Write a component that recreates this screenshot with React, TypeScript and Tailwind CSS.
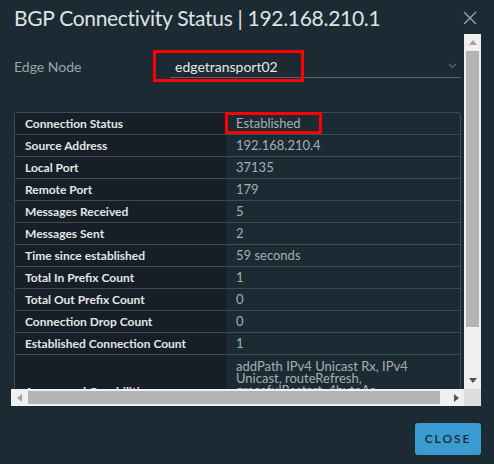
import React from 'react';

const rows: [string, string][] = [
  ['Connection Status', 'Established'],
  ['Source Address', '192.168.210.4'],
  ['Local Port', '37135'],
  ['Remote Port', '179'],
  ['Messages Received', '5'],
  ['Messages Sent', '2'],
  ['Time since established', '59 seconds'],
  ['Total In Prefix Count', '1'],
  ['Total Out Prefix Count', '0'],
  ['Connection Drop Count', '0'],
  ['Established Connection Count', '1'],
];

const capabilities =
  'addPath IPv4 Unicast Rx, IPv4 Unicast, routeRefresh, gracefulRestart, 4byteAs, multiProtocol IPv4 Unicast, enhancedRouteRefresh';

const App: React.FC = () => {
  return (
    <div
      className="w-[494px] h-[464px] bg-[#1c2a33] flex flex-col overflow-hidden"
      style={{ fontFamily: 'Lato, "Noto Sans", sans-serif' }}
    >
      {/* header */}
      <div className="flex items-start justify-between pl-[14px] pr-[17px] pt-[5px] h-[34px]">
        <h1 className="text-[21px] leading-[26px] text-[#dfe3e5] font-normal tracking-[-0.3px]">
          BGP Connectivity Status | 192.168.210.1
        </h1>
        <svg width="14" height="14" viewBox="0 0 14 14" className="mt-[6px]">
          <path d="M1 1 L13 13 M13 1 L1 13" stroke="#9aa4aa" strokeWidth="1.4" />
        </svg>
      </div>

      {/* scroll area */}
      <div className="ml-[11px] w-[470px] grid grid-cols-[453px_17px] grid-rows-[355px_17px]">
        <div className="overflow-hidden">
          <div className="relative mt-[21px] flex items-center">
            <span className="w-[159px] pl-[3px] text-[14px] text-[#9aa3a8]">Edge Node</span>
            <div className="flex-1 mr-[3px] h-[23px] border-b border-[#56646c] flex items-center justify-between pl-[5px] pr-[4px]">
              <span className="text-[14px] text-[#e6e9ea]">edgetransport02</span>
              <svg width="9" height="6" viewBox="0 0 9 6">
                <path d="M1 1 L4.5 4.5 L8 1" fill="none" stroke="#5c6a72" strokeWidth="1.2" />
              </svg>
            </div>
            <div className="absolute left-[142px] top-[-5px] w-[151px] h-[32px] border-[3px] border-[#ff0000]" />
          </div>

          <div className="ml-[3px] mt-[34px] w-[447px] border border-[#3e4b53] rounded-[3px]">
            {rows.map(([label, value], i) => (
              <div key={label} className="relative grid grid-cols-[211px_1fr] h-[22px] border-b border-[#3e4b53]">
                <div className="bg-[#161f27] pl-[10px] flex items-center text-[12px] font-bold text-[#e3e6e8]">
                  {label}
                </div>
                <div className="pl-[10px] flex items-center text-[13px] text-[#a7afb4]">{value}</div>
                {i === 0 && (
                  <div className="absolute left-[210px] top-[-1px] w-[97px] h-[22px] border-[3px] border-[#ff0000]" />
                )}
              </div>
            ))}
            <div className="grid grid-cols-[211px_1fr] min-h-[74px]">
              <div className="bg-[#161f27] pl-[10px] flex items-center text-[12px] font-bold text-[#e3e6e8]">
                Announced Capabilities
              </div>
              <div className="pl-[10px] pt-[5px] pb-[5px] text-[13px] leading-[12px] text-[#a7afb4]">
                <p className="max-w-[200px]">{capabilities}</p>
              </div>
            </div>
          </div>
        </div>

        {/* vertical scrollbar */}
        <div className="bg-[#f0f0f0] flex flex-col items-center">
          <div className="h-[17px] flex items-center justify-center">
            <svg width="8" height="5" viewBox="0 0 8 5">
              <path d="M0 5 L4 0 L8 5 Z" fill="#a3a3a3" />
            </svg>
          </div>
          <div className="w-[13px] h-[276px] bg-[#b4b4b4]" />
          <div className="flex-1 flex items-end justify-center pb-[6px]">
            <svg width="8" height="5" viewBox="0 0 8 5">
              <path d="M0 0 L8 0 L4 5 Z" fill="#505050" />
            </svg>
          </div>
        </div>

        {/* horizontal scrollbar */}
        <div className="bg-[#f0f0f0] flex items-center">
          <div className="w-[17px] flex items-center justify-center">
            <svg width="5" height="8" viewBox="0 0 5 8">
              <path d="M5 0 L0 4 L5 8 Z" fill="#a3a3a3" />
            </svg>
          </div>
          <div className="h-[13px] w-[412px] bg-[#b4b4b4]" />
          <div className="flex-1 flex items-center justify-end pr-[5px]">
            <svg width="5" height="8" viewBox="0 0 5 8">
              <path d="M0 0 L5 4 L0 8 Z" fill="#505050" />
            </svg>
          </div>
        </div>
        <div className="bg-[#dcdcdc]" />
      </div>

      {/* footer */}
      <div className="flex justify-end pr-[13px] mt-[17px]">
        <button className="w-[66px] h-[32px] bg-[#3a9bd1] rounded-[3px] text-[12px] font-semibold tracking-[0.16em] text-[#1c2a33]">
          CLOSE
        </button>
      </div>
    </div>
  );
};

export default App;
